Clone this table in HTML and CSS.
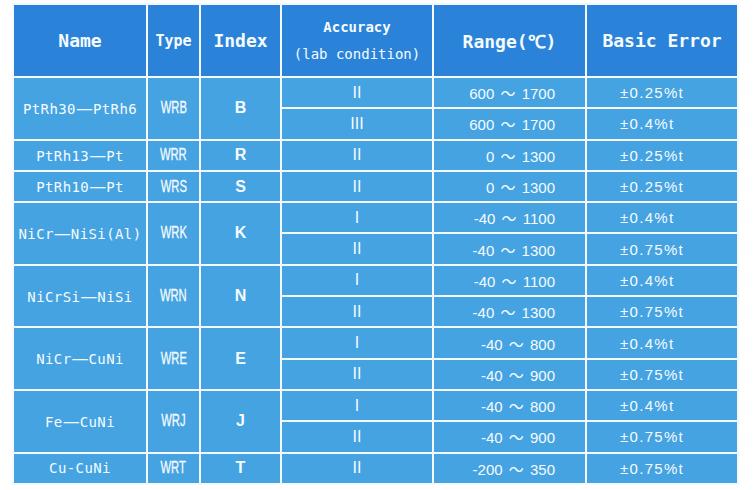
FILE: index.html
```html
<!DOCTYPE html>
<html>
<head>
<meta charset="utf-8">
<link rel="stylesheet" href="styles.css">
</head>
<body>
<table class="spec">
  <colgroup>
    <col class="c-name"><col class="c-type"><col class="c-index"><col class="c-acc"><col class="c-range"><col class="c-err">
  </colgroup>
  <thead>
    <tr class="head">
      <th class="h-big">Name</th>
      <th class="h-type">Type</th>
      <th class="h-big">Index</th>
      <th class="h-acc"><span class="acc1">Accuracy</span><br><span class="acc2">(lab condition)</span></th>
      <th class="h-big h-range">Range(℃)</th>
      <th class="h-big">Basic Error</th>
    </tr>
  </thead>
  <tbody>
    <tr>
      <td rowspan="2" class="name">PtRh30<span class="dash">—</span>PtRh6</td>
      <td rowspan="2" class="type"><span>WRB</span></td>
      <td rowspan="2" class="idx">B</td>
      <td class="acc">II</td><td class="range">600 ～ 1700</td><td class="err">±0.25%t</td>
    </tr>
    <tr><td class="acc">III</td><td class="range">600 ～ 1700</td><td class="err">±0.4%t</td></tr>
    <tr>
      <td class="name">PtRh13<span class="dash">—</span>Pt</td><td class="type"><span>WRR</span></td><td class="idx">R</td>
      <td class="acc">II</td><td class="range">0 ～ 1300</td><td class="err">±0.25%t</td>
    </tr>
    <tr>
      <td class="name">PtRh10<span class="dash">—</span>Pt</td><td class="type"><span>WRS</span></td><td class="idx">S</td>
      <td class="acc">II</td><td class="range">0 ～ 1300</td><td class="err">±0.25%t</td>
    </tr>
    <tr>
      <td rowspan="2" class="name">NiCr<span class="dash">—</span>NiSi(Al)</td>
      <td rowspan="2" class="type"><span>WRK</span></td>
      <td rowspan="2" class="idx">K</td>
      <td class="acc">I</td><td class="range">-40 ～ 1100</td><td class="err">±0.4%t</td>
    </tr>
    <tr><td class="acc">II</td><td class="range">-40 ～ 1300</td><td class="err">±0.75%t</td></tr>
    <tr>
      <td rowspan="2" class="name">NiCrSi<span class="dash">—</span>NiSi</td>
      <td rowspan="2" class="type"><span>WRN</span></td>
      <td rowspan="2" class="idx">N</td>
      <td class="acc">I</td><td class="range">-40 ～ 1100</td><td class="err">±0.4%t</td>
    </tr>
    <tr><td class="acc">II</td><td class="range">-40 ～ 1300</td><td class="err">±0.75%t</td></tr>
    <tr>
      <td rowspan="2" class="name">NiCr<span class="dash">—</span>CuNi</td>
      <td rowspan="2" class="type"><span>WRE</span></td>
      <td rowspan="2" class="idx">E</td>
      <td class="acc">I</td><td class="range">-40 ～ 800</td><td class="err">±0.4%t</td>
    </tr>
    <tr><td class="acc">II</td><td class="range">-40 ～ 900</td><td class="err">±0.75%t</td></tr>
    <tr>
      <td rowspan="2" class="name">Fe<span class="dash">—</span>CuNi</td>
      <td rowspan="2" class="type"><span>WRJ</span></td>
      <td rowspan="2" class="idx">J</td>
      <td class="acc">I</td><td class="range">-40 ～ 800</td><td class="err">±0.4%t</td>
    </tr>
    <tr><td class="acc">II</td><td class="range">-40 ～ 900</td><td class="err">±0.75%t</td></tr>
    <tr>
      <td class="name">Cu-CuNi</td><td class="type"><span>WRT</span></td><td class="idx">T</td>
      <td class="acc">II</td><td class="range">-200 ～ 350</td><td class="err">±0.75%t</td>
    </tr>
  </tbody>
</table>
</body>
</html>
```

FILE: styles.css
```css
html, body {
  margin: 0;
  padding: 0;
  background: #ffffff;
}

.spec {
  margin: 3px 0 0 12px;
  border-collapse: separate;
  border-spacing: 2px;
  table-layout: fixed;
  width: 727px;
  background: #f4f9fd;
  color: #f6fbff;
}

.c-name { width: 132px; }
.c-type { width: 51px; }
.c-index { width: 79px; }
.c-acc { width: 150px; }
.c-range { width: 151px; }
.c-err { width: 150px; }

.spec th, .spec td {
  padding: 0;
  text-align: center;
  vertical-align: middle;
  white-space: nowrap;
  overflow: hidden;
}

.spec th {
  background: #2b83d9;
  font-family: "DejaVu Sans Mono", monospace;
  font-weight: bold;
}

.spec td {
  background: #45a3e2;
  font-family: "Liberation Sans", "Noto Sans CJK SC", sans-serif;
  font-size: 15px;
}

.head { height: 71px; }
.spec tbody tr { height: 29.3px; }

.h-big { font-size: 18px; }
.h-type { font-size: 15px; }
.h-acc { font-size: 14px; line-height: 27px; }
.acc1 { font-weight: bold; }
.acc2 { font-weight: normal; }

.name {
  font-family: "DejaVu Sans Mono", monospace !important;
  font-size: 14px !important;
  letter-spacing: 0.4px;
}

.dash {
  font-family: "DejaVu Sans", sans-serif;
  font-size: 17px;
  line-height: 1;
  letter-spacing: 0;
}

.type span {
  display: inline-block;
  font-size: 17px;
  transform: scaleX(0.66);
  -webkit-text-stroke: 0.3px #f6fbff;
}

.idx {
  font-weight: bold;
  font-size: 16px !important;
}

.acc {
  font-size: 16px !important;
}

.range {
  text-align: right !important;
  padding-right: 30px !important;
  word-spacing: 2px;
}

.err {
  text-align: left !important;
  padding-left: 33px !important;
  letter-spacing: 1.3px;
}
```
